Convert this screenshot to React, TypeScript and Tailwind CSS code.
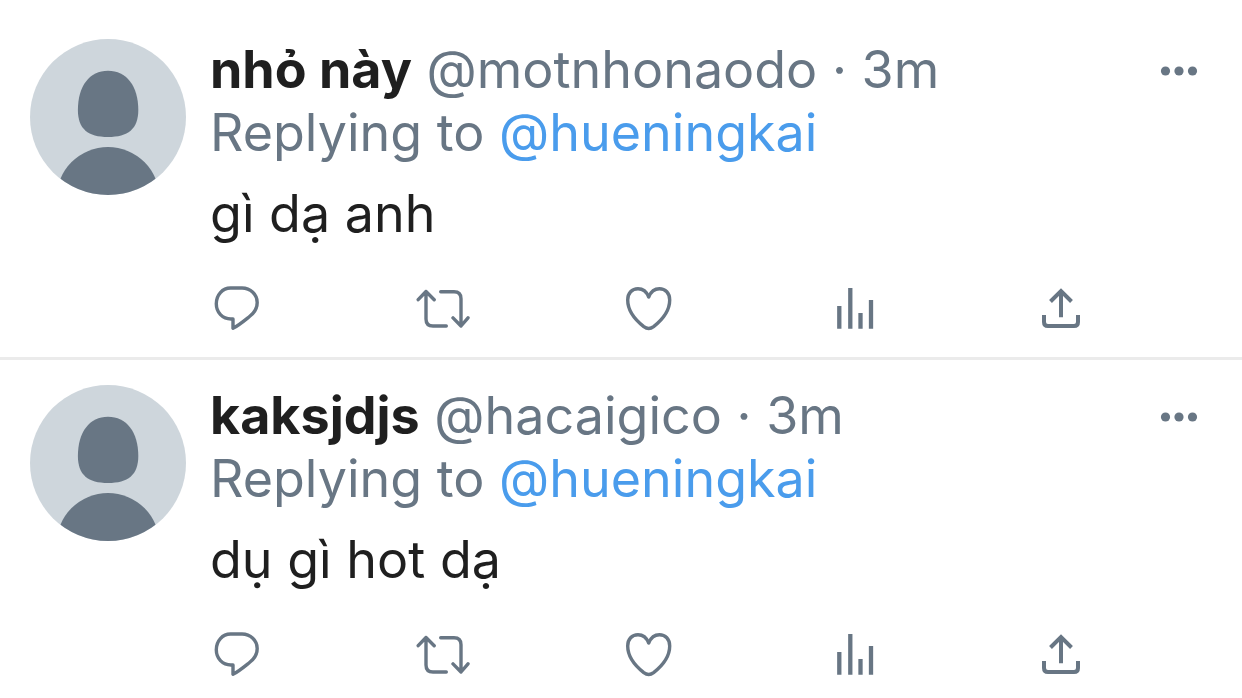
import type { ReactNode } from "react";

type Tweet = {
    name: string;
    handle: string;
    time: string;
    replyTo: string;
    text: string;
};

const tweets: Tweet[] = [
    { name: "nhỏ này", handle: "@motnhonaodo", time: "3m", replyTo: "@hueningkai", text: "gì dạ anh" },
    { name: "kaksjdjs", handle: "@hacaigico", time: "3m", replyTo: "@hueningkai", text: "dụ gì hot dạ" },
];

function Avatar() {
    return (
        <svg viewBox="0 0 156 156" className="size-[156px] shrink-0 rounded-full bg-[#ced6dc]" aria-hidden="true">
            <path
                d="M78 31.7C96.500 31.7 108.300 47 108.300 71C108.300 90 98 98 78 98C58 98 47.900 90 47.900 71C47.900 47 59.500 31.7 78 31.7Z"
                fill="#687684"
            />
            <circle cx="78" cy="159.500" r="51.500" fill="#687684" />
        </svg>
    );
}

function IconButton({ label, children }: { label: string; children: ReactNode }) {
    return (
        <button type="button" aria-label={label} className="shrink-0 cursor-pointer text-[#687684]">
            <svg
                viewBox="0 0 54 54"
                className="size-[54px]"
                fill="none"
                stroke="currentColor"
                strokeWidth="3.4"
                strokeLinecap="round"
                strokeLinejoin="round"
            >
                {children}
            </svg>
        </button>
    );
}

function Actions() {
    return (
        <div className="mt-[37px] flex justify-between pr-[118px]">
            <IconButton label="Reply">
                <path d="M20.500 6H32C40.500 6 47.200 12.500 47.200 20.500C47.200 26 44.500 30.800 39.500 34.500C34.500 38.500 29 43.200 23 46.300V37H21C12.500 37 6.300 30.500 6.300 21.800C6.300 12.800 12.500 6 20.500 6Z" />
            </IconButton>
            <IconButton label="Retweet">
                <path d="M2.200 17.700L10 9.500L18.200 17.700M10 9.500V37C10 41.500 12.500 44 17 44H30.300" />
                <path d="M24.700 9.700H38C42.500 9.700 45 12.200 45 16.700V44M37 35.900L45 44L52 35.900" />
            </IconButton>
            <IconButton label="Like">
                <path d="M26.700 15C24.500 9.500 20.500 6.800 16 6.800C10 6.800 5.700 11 5.700 18C5.700 29 14 38.500 21.800 44.600Q26.700 48.200 31.600 44.600C39.400 38.500 47.700 29 47.700 18C47.700 11 43.400 6.800 37.400 6.800C33 6.800 29 9.500 26.700 15Z" />
            </IconButton>
            <IconButton label="View analytics">
                <path d="M11.300 24V46.700M22.300 6V46.700M32.500 31V46.700M43 18V46.700" strokeWidth="4.300" strokeLinecap="butt" />
            </IconButton>
            <IconButton label="Share">
                <path
                    d="M27 9V35.300M16.500 19.500L27 9L37.500 19.500M10 33V40C10 42.500 11.500 44 14 44H40C42.500 44 44 42.500 44 40V33"
                    strokeWidth="4"
                    strokeLinecap="butt"
                    strokeLinejoin="miter"
                />
            </IconButton>
        </div>
    );
}

function TweetRow({ tweet }: { tweet: Tweet }) {
    return (
        <article className="flex gap-6 border-b-3 border-[#ebebeb] pt-6 pr-9 pb-[21px] pl-[30px] last:border-b-0 last:pb-0">
            <div className="pt-px">
                <Avatar />
            </div>
            <div className="min-w-0 flex-1">
                <div className="flex items-center justify-between gap-4">
                    <p className="min-w-0 truncate text-[#687684]">
                        <a href="#" className="font-bold text-[#1f1f1f]">{tweet.name}</a>{" "}
                        <span>{tweet.handle} · {tweet.time}</span>
                    </p>
                    <IconButton label="More">
                        <g fill="currentColor" stroke="none">
                            <circle cx="13.500" cy="28" r="4.600" />
                            <circle cx="27" cy="28" r="4.600" />
                            <circle cx="40.500" cy="28" r="4.600" />
                        </g>
                    </IconButton>
                </div>
                <p className="text-[#687684]">
                    Replying to <a href="#" className="text-[#4a9cec]">{tweet.replyTo}</a>
                </p>
                <p className="mt-[18px] text-[#1f1f1f]">{tweet.text}</p>
                <Actions />
            </div>
        </article>
    );
}

export default function App() {
    return (
        <main className="bg-white pt-[14px] font-['Inter','Liberation_Sans',sans-serif] text-[52px] leading-[63px]">
            {tweets.map((tweet) => (
                <TweetRow key={tweet.handle} tweet={tweet} />
            ))}
        </main>
    );
}
